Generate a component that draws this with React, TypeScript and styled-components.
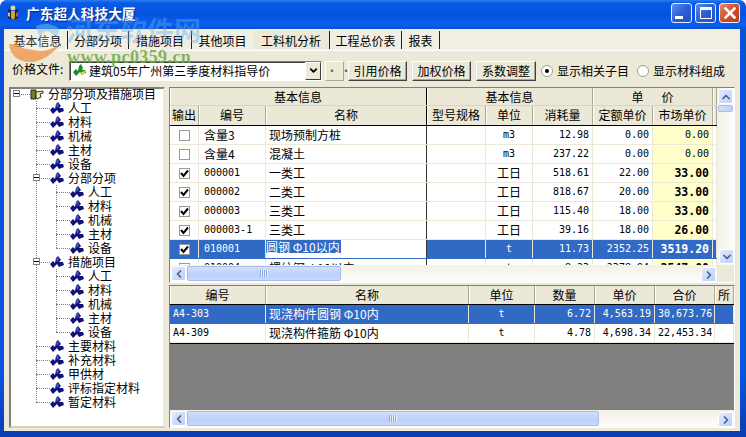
import React from "react";
import styled, { createGlobalStyle } from "styled-components";
import { ChevronDown, ChevronLeft, ChevronRight, ChevronUp } from "lucide-react";

const CJK = `"Noto Sans CJK SC", "Liberation Sans", sans-serif`;
const MONO = `"DejaVu Sans Mono", "Liberation Mono", monospace`;

const TOP_COLS = "29px 67px 161px 59px 47px 60px 60px 60px 1fr";
const TOP_GROUP_COLS = "257px 166px 120px 1fr";
const LOW_COLS = "96px 203px 66px 60px 60px 60px 1fr";

const tabs = [
  { label: "基本信息", width: 60 },
  { label: "分部分项", width: 61 },
  { label: "措施项目", width: 63 },
  { label: "其他项目", width: 61, plain: true },
  { label: "工料机分析", width: 77, active: true },
  { label: "工程总价表", width: 72 },
  { label: "报表", width: 38 },
];

const leaves = ["人工", "材料", "机械", "主材", "设备"];

type TreeItem = { label: string; children?: TreeItem[] };

const tree: TreeItem[] = [
  ...leaves.map((label) => ({ label })),
  { label: "分部分项", children: leaves.map((label) => ({ label })) },
  { label: "措施项目", children: leaves.map((label) => ({ label })) },
  { label: "主要材料" },
  { label: "补充材料" },
  { label: "甲供材" },
  { label: "评标指定材料" },
  { label: "暂定材料" },
];

const materials = [
  { out: false, code: "含量3", name: "现场预制方桩", unit: "m3", qty: "12.98", quota: "0.00", market: "0.00" },
  { out: false, code: "含量4", name: "混凝土", unit: "m3", qty: "237.22", quota: "0.00", market: "0.00" },
  { out: true, code: "000001", name: "一类工", unit: "工日", qty: "518.61", quota: "22.00", market: "33.00", bold: true },
  { out: true, code: "000002", name: "二类工", unit: "工日", qty: "818.67", quota: "20.00", market: "33.00", bold: true },
  { out: true, code: "000003", name: "三类工", unit: "工日", qty: "115.40", quota: "18.00", market: "33.00", bold: true },
  { out: true, code: "000003-1", name: "三类工", unit: "工日", qty: "39.16", quota: "18.00", market: "26.00", bold: true },
  { out: true, code: "010001", name: "圆钢 Φ10以内", unit: "t", qty: "11.73", quota: "2352.25", market: "3519.20", bold: true, selected: true },
  { out: false, code: "010004", name: "螺纹钢 Φ10以内", unit: "t", qty: "8.23", quota: "2378.94", market: "3547.00", bold: true },
];

const items = [
  { code: "A4-303", name: "现浇构件圆钢 Φ10内", unit: "t", qty: "6.72", price: "4,563.19", total: "30,673.76", selected: true },
  { code: "A4-309", name: "现浇构件箍筋 Φ10内", unit: "t", qty: "4.78", price: "4,698.34", total: "22,453.34" },
];

const isAscii = (s: string) => /^[\x00-\x7f]+$/.test(s);

const TreeGlyph = ({ color }: { color: string }) => (
  <svg width="14" height="13" viewBox="0 0 14 13">
    <path d="M0 8 L3 5 L5 7 L6 2 L8 0 L11 4 L9 6 L13 6 L14 9 L9 11 L7 8 L5 10 L3 12 Z" fill={color} />
    <path d="M6 2 L8 1 L9 4 L7 6 Z" fill="#5a78d8" opacity="0.7" />
  </svg>
);

const RootGlyph = () => (
  <svg width="14" height="13" viewBox="0 0 14 13">
    <path d="M1 2 H6 V11 H1 Z" fill="#7d7a22" stroke="#222" strokeWidth="1" />
    <path d="M6 4 L13 3 V5 L10 6 L11 9 L7 11 L6 9 Z" fill="#f6e9a0" stroke="#333" strokeWidth="1" />
  </svg>
);

const PriceGlyph = () => (
  <svg width="13" height="13" viewBox="0 0 13 13">
    <path d="M0 8 L3 5 L5 7 L6 2 L8 0 L10 4 L9 6 L12 6 L13 9 L9 11 L7 8 L5 10 L3 12 Z" fill="#1f8a2c" />
    <path d="M8 8 L12 7 L12 10 L9 11 Z" fill="#e8d84a" />
  </svg>
);

const AppGlyph = () => (
  <svg width="14" height="16" viewBox="0 0 14 16">
    <path d="M2 4 L5 6 H9 L12 4 L12 13 L7 15 L2 13 Z" fill="#1c1c28" />
    <path d="M5 6 H9 V13 L7 15 L5 13 Z" fill="#c8a63a" />
    <circle cx="7" cy="3" r="2.4" fill="#e8d2a0" />
    <path d="M2 7 L4 8 V12 L2 11 Z" fill="#b9b9c4" />
    <path d="M12 7 L10 8 V12 L12 11 Z" fill="#c9563a" />
  </svg>
);

const TickMark = () => (
  <svg width="9" height="9" viewBox="0 0 9 9">
    <path d="M1 4 L3.5 7 L8 1.5" fill="none" stroke="#000" strokeWidth="2" />
  </svg>
);

const CloseMark = () => (
  <svg width="12" height="12" viewBox="0 0 12 12">
    <path d="M1.5 1.5 L10.5 10.5 M10.5 1.5 L1.5 10.5" stroke="#fff" strokeWidth="2.6" strokeLinecap="square" />
  </svg>
);

const TreeBranch = ({ nodes, root }: { nodes: TreeItem[]; root?: boolean }) => (
  <TreeGroup $root={root}>
    {nodes.map((node, i) => (
      <div key={node.label + i}>
        <TreeRow>
          <TreeStub>{node.children && <Expander />}</TreeStub>
          <TreeGlyph color="#10107a" />
          <TreeLabel>{node.label}</TreeLabel>
        </TreeRow>
        {node.children && <TreeBranch nodes={node.children} />}
      </div>
    ))}
  </TreeGroup>
);

const HScroll = ({ thumb }: { thumb: number }) => (
  <HBar>
    <ScrollBtn>
      <ChevronLeft size={12} strokeWidth={3.5} />
    </ScrollBtn>
    <Thumb $size={thumb}>
      <Grip />
    </Thumb>
    <ScrollBtn $end>
      <ChevronRight size={12} strokeWidth={3.5} />
    </ScrollBtn>
  </HBar>
);

const App = () => {
  return (
    <Frame>
      <GlobalStyle />
      <TitleBar>
        <AppGlyph />
        <TitleText>广东超人科技大厦</TitleText>
        <WinButtons>
          <WinButton>
            <MinBar />
          </WinButton>
          <WinButton>
            <MaxBox />
          </WinButton>
          <WinButton $close>
            <CloseMark />
          </WinButton>
        </WinButtons>
      </TitleBar>

      <Body>
        <TabStrip>
          {tabs.map((t) => (
            <Tab key={t.label} $width={t.width} $active={t.active} $plain={t.plain}>
              {t.label}
            </Tab>
          ))}
        </TabStrip>

        <Toolbar>
          <FieldLabel>价格文件:</FieldLabel>
          <Combo>
            <PriceGlyph />
            <ComboText>建筑05年广州第三季度材料指导价</ComboText>
            <ComboArrow>
              <ChevronDown size={11} strokeWidth={4} />
            </ComboArrow>
          </Combo>
          <DotsButton $width={19} $left={3}>··</DotsButton>
          <RaisedButton $width={59} $left={4}>引用价格</RaisedButton>
          <RaisedButton $width={59} $left={5}>加权价格</RaisedButton>
          <RaisedButton $width={60} $left={5}>系数调整</RaisedButton>
          <RadioDot $checked $left={5} />
          <RadioText>显示相关子目</RadioText>
          <RadioDot $left={8} />
          <RadioText>显示材料组成</RadioText>
        </Toolbar>

        <Main>
          <TreePane>
            <TreeRootRow>
              <TreeStub>
                <Expander />
              </TreeStub>
              <RootGlyph />
              <TreeLabel>分部分项及措施项目</TreeLabel>
            </TreeRootRow>
            <TreeBranch nodes={tree} root />
          </TreePane>

          <RightColumn>
            <TopGrid>
              <TableArea>
                <HeaderRow $cols={TOP_GROUP_COLS} $height={18}>
                  <HeadCell $strong>基本信息</HeadCell>
                  <HeadCell>基本信息</HeadCell>
                  <HeadCell>{"单\u3000\u2002价"}</HeadCell>
                  <HeadCell />
                </HeaderRow>
                <HeaderRow $cols={TOP_COLS} $height={20} $ruled>
                  <HeadCell>输出</HeadCell>
                  <HeadCell>编号</HeadCell>
                  <HeadCell $strong>名称</HeadCell>
                  <HeadCell>型号规格</HeadCell>
                  <HeadCell>单位</HeadCell>
                  <HeadCell>消耗量</HeadCell>
                  <HeadCell>定额单价</HeadCell>
                  <HeadCell>市场单价</HeadCell>
                  <HeadCell />
                </HeaderRow>
                {materials.map((m) => (
                  <DataRow key={m.code} $cols={TOP_COLS} $selected={m.selected}>
                    <Cell $align="center">
                      <CheckBox>{m.out && <TickMark />}</CheckBox>
                    </Cell>
                    <Cell $pad={5} $mono={isAscii(m.code)}>{m.code}</Cell>
                    {m.selected ? (
                      <EditorCell>
                        <EditorText>{m.name}</EditorText>
                      </EditorCell>
                    ) : (
                      <Cell $pad={3} $strong>{m.name}</Cell>
                    )}
                    <Cell />
                    <Cell $align="center" $mono={isAscii(m.unit)}>{m.unit}</Cell>
                    <Cell $align="right" $pad={3} $mono>{m.qty}</Cell>
                    <Cell $align="right" $pad={3} $mono>{m.quota}</Cell>
                    <MarketCell $bold={m.bold} $selected={m.selected}>{m.market}</MarketCell>
                    <Cell />
                  </DataRow>
                ))}
              </TableArea>
              <VBar>
                <ScrollBtn>
                  <ChevronUp size={12} strokeWidth={3.5} />
                </ScrollBtn>
                <VThumb />
                <ScrollBtn $end>
                  <ChevronDown size={12} strokeWidth={3.5} />
                </ScrollBtn>
              </VBar>
              <HScroll thumb={154} />
              <Corner />
            </TopGrid>

            <LowerGrid>
              <TableArea>
                <HeaderRow $cols={LOW_COLS} $height={19} $ruled>
                  <HeadCell>编号</HeadCell>
                  <HeadCell>名称</HeadCell>
                  <HeadCell>单位</HeadCell>
                  <HeadCell>数量</HeadCell>
                  <HeadCell>单价</HeadCell>
                  <HeadCell>合价</HeadCell>
                  <HeadCell>所</HeadCell>
                </HeaderRow>
                {items.map((it) => (
                  <DataRow key={it.code} $cols={LOW_COLS} $selected={it.selected}>
                    <Cell $pad={3} $mono>{it.code}</Cell>
                    <Cell $pad={3}>{it.name}</Cell>
                    <Cell $align="center" $mono>{it.unit}</Cell>
                    <Cell $align="right" $pad={3} $mono>{it.qty}</Cell>
                    <Cell $align="right" $pad={3} $mono>{it.price}</Cell>
                    <Cell $align="right" $pad={3} $mono>{it.total}</Cell>
                    <Cell />
                  </DataRow>
                ))}
                <EmptyArea />
              </TableArea>
              <HScroll thumb={412} />
            </LowerGrid>
          </RightColumn>
        </Main>
      </Body>

      {/* site stamp laid over the top-left corner of the window */}
      <Watermark>
        <MarkLogo width="80" height="70" viewBox="0 0 80 70">
          <ellipse cx="34" cy="44" rx="24" ry="9" fill="#ffffff" fillOpacity="0.2" />
          <path d="M9 44 C10 55 18 62 30 62 C42 62 52 54 60 45 C50 50 42 52 34 50 C26 49 20 48 17 44 Z" fill="#ee8a3a" fillOpacity="0.7" />
          <path d="M36 26 C44 22 56 24 60 30 L56 38 L50 32 C46 30 42 32 40 38 Z" fill="#7cc0f4" fillOpacity="0.5" />
        </MarkLogo>
        <MarkName>河东软件网</MarkName>
        <MarkUrl>www.pc0359.cn</MarkUrl>
      </Watermark>
    </Frame>
  );
};

export default App;

const GlobalStyle = createGlobalStyle`
  html, body {
    margin: 0;
    padding: 0;
    background: #fff;
  }
  * {
    box-sizing: border-box;
  }
`;

const Frame = styled.div`
  position: relative;
  width: 746px;
  height: 437px;
  overflow: hidden;
  display: flex;
  flex-direction: column;
  padding: 0 6px 6px 4px;
  border-radius: 7px 7px 0 0;
  background: linear-gradient(#0a50d8, #0a55e0 85%, #0a3db0);
  font-family: ${CJK};
  font-size: 12px;
  color: #000;
`;

const TitleBar = styled.div`
  height: 29px;
  flex: none;
  margin: 0 -6px 0 -4px;
  padding: 0 6px 3px 6px;
  display: flex;
  align-items: center;
  border-radius: 7px 7px 0 0;
  background: linear-gradient(#2a7ff0 0, #0a5ae6 10%, #0552dc 50%, #0a60ee 85%, #0a4fd0 100%);
`;

const TitleText = styled.div`
  margin-left: 6px;
  font-size: 13.7px;
  font-weight: 700;
  line-height: 18px;
  color: #fff;
  text-shadow: 1px 1px 1px #0a2a80;
`;

const WinButtons = styled.div`
  margin-left: auto;
  display: flex;
  gap: 3px;
`;

const WinButton = styled.div<{ $close?: boolean }>`
  width: 21px;
  height: 20px;
  display: flex;
  align-items: center;
  justify-content: center;
  border: 1px solid #e4ecff;
  border-radius: 3px;
  background: ${(p) =>
    p.$close
      ? "linear-gradient(135deg, #e88a68, #d0502c 50%, #b83a18)"
      : "linear-gradient(135deg, #5c8cf0, #2c5ed8 50%, #2450c4)"};
`;

const MinBar = styled.span`
  width: 8px;
  height: 3px;
  margin: 9px 6px 0 0;
  background: #fff;
`;

const MaxBox = styled.span`
  width: 12px;
  height: 12px;
  border: 1px solid #fff;
  border-top-width: 3px;
`;

const Body = styled.div`
  flex: 1;
  display: flex;
  flex-direction: column;
  background: #ece9d8;
  min-height: 0;
`;

const TabStrip = styled.div`
  height: 22px;
  flex: none;
  display: flex;
  align-items: flex-end;
  padding: 0 0 1px 4px;
  border-bottom: 1px solid #fff;
  background: #f1efe3;
`;

const Tab = styled.div<{ $width: number; $active?: boolean; $plain?: boolean }>`
  width: ${(p) => p.$width}px;
  height: 18px;
  line-height: 20px;
  text-align: center;
  white-space: nowrap;
  border-right: ${(p) => (p.$plain ? "0" : "1px solid #222")};
  background: ${(p) => (p.$active ? "#ece9d8" : "transparent")};
`;

const Toolbar = styled.div`
  height: 36px;
  flex: none;
  display: flex;
  align-items: center;
  padding: 3px 0 0 8px;
`;

const FieldLabel = styled.div`
  width: 57px;
  margin-top: -5px;
  white-space: nowrap;
`;

const Combo = styled.div`
  width: 253px;
  height: 20px;
  display: flex;
  align-items: center;
  padding-left: 3px;
  background: #fff;
  border: 1px solid;
  border-color: #808080 #fff #fff #808080;
  box-shadow: inset 1px 1px 0 #404040;
`;

const ComboText = styled.span`
  margin-left: 3px;
  white-space: nowrap;
`;

const ComboArrow = styled.span`
  margin-left: auto;
  width: 16px;
  height: 18px;
  display: flex;
  align-items: center;
  justify-content: center;
  background: #ece9d8;
  border: 1px solid;
  border-color: #fff #404040 #404040 #fff;
`;

const RaisedButton = styled.div<{ $width: number; $left: number }>`
  width: ${(p) => p.$width}px;
  height: 20px;
  margin-left: ${(p) => p.$left}px;
  line-height: 18px;
  text-align: center;
  white-space: nowrap;
  background: #ece9d8;
  border: 1px solid;
  border-color: #fff #404040 #404040 #fff;
  box-shadow: inset -1px -1px 0 #aca899;
`;

const DotsButton = styled(RaisedButton)`
  color: #666;
  letter-spacing: 2px;
  border-color: #fff #aca899 #aca899 #fff;
  box-shadow: none;
`;

const RadioDot = styled.span<{ $checked?: boolean; $left: number }>`
  width: 12px;
  height: 12px;
  flex: none;
  margin-left: ${(p) => p.$left}px;
  display: flex;
  align-items: center;
  justify-content: center;
  border-radius: 50%;
  background: #fff;
  border: 1px solid #a0a090;
  &::after {
    content: "";
    width: 4px;
    height: 4px;
    border-radius: 50%;
    background: ${(p) => (p.$checked ? "#000" : "transparent")};
  }
`;

const RadioText = styled.span`
  margin-left: 4px;
  white-space: nowrap;
`;

const Main = styled.div`
  height: 341px;
  flex: none;
  display: flex;
  gap: 4px;
  padding-left: 5px;
`;

const TreePane = styled.div`
  width: 156px;
  background: #fff;
  border: 2px solid;
  border-color: #808080 #ece9d8 #d4d0c0 #808080;
`;

const TreeRootRow = styled.div`
  height: 14px;
  margin: -2px 0 0 -5px;
  display: flex;
  align-items: center;
`;

const TreeGroup = styled.div<{ $root?: boolean }>`
  position: relative;
  margin-left: ${(p) => (p.$root ? "15px" : "20px")};
  &::before {
    content: "";
    position: absolute;
    left: 10px;
    top: 0;
    bottom: 7px;
    border-left: 1px dotted #808080;
  }
`;

const TreeRow = styled.div`
  height: 14px;
  display: flex;
  align-items: center;
`;

const TreeStub = styled.span`
  position: relative;
  width: 24px;
  height: 14px;
  flex: none;
  &::after {
    content: "";
    position: absolute;
    left: 10px;
    right: 0;
    top: 7px;
    border-top: 1px dotted #808080;
  }
`;

const Expander = styled.span`
  position: absolute;
  z-index: 1;
  left: 7px;
  top: 3px;
  width: 7px;
  height: 7px;
  background: linear-gradient(#000, #000) center / 5px 1px no-repeat #fff;
  border: 1px solid #808080;
`;

const TreeLabel = styled.span`
  margin-left: 4px;
  line-height: 14px;
  white-space: nowrap;
`;

const RightColumn = styled.div`
  width: 566px;
  display: flex;
  flex-direction: column;
  gap: 2px;
`;

const TopGrid = styled.div`
  height: 196px;
  flex: none;
  display: grid;
  grid-template-columns: 1fr 17px;
  grid-template-rows: 177px 17px;
  background: #fff;
  border: 1px solid;
  border-color: #808080 #fff #fff #808080;
`;

const LowerGrid = styled.div`
  height: 143px;
  flex: none;
  display: flex;
  flex-direction: column;
  background: #fff;
  border: 1px solid;
  border-color: #808080 #fff #fff #808080;
`;

const TableArea = styled.div`
  min-width: 0;
  flex: 1;
  overflow: hidden;
  display: flex;
  flex-direction: column;
`;

const HeaderRow = styled.div<{ $cols: string; $height: number; $ruled?: boolean }>`
  height: ${(p) => p.$height}px;
  flex: none;
  display: grid;
  grid-template-columns: ${(p) => p.$cols};
  background: #ebe8d8;
  border-bottom: 1px solid ${(p) => (p.$ruled ? "#000" : "#d8d4c4")};
`;

const HeadCell = styled.div<{ $strong?: boolean }>`
  min-width: 0;
  overflow: hidden;
  text-align: center;
  white-space: pre;
  line-height: 18px;
  border-right: 1px solid ${(p) => (p.$strong ? "#000" : "#aca899")};
  box-shadow: inset 1px 0 0 #fff;
`;

const DataRow = styled.div<{ $cols: string; $selected?: boolean }>`
  height: 19px;
  flex: none;
  display: grid;
  grid-template-columns: ${(p) => p.$cols};
  background: ${(p) => (p.$selected ? "#316ac5" : "#fff")};
  color: ${(p) => (p.$selected ? "#fff" : "#000")};
  border-bottom: 1px solid ${(p) => (p.$selected ? "#316ac5" : "#ece9d8")};
`;

const Cell = styled.div<{ $align?: string; $pad?: number; $mono?: boolean; $strong?: boolean }>`
  min-width: 0;
  overflow: hidden;
  white-space: nowrap;
  line-height: 18px;
  text-align: ${(p) => p.$align || "left"};
  padding: 0 ${(p) => p.$pad || 0}px;
  font-family: ${(p) => (p.$mono ? MONO : CJK)};
  font-size: ${(p) => (p.$mono ? "10px" : "12px")};
  border-right: 1px solid ${(p) => (p.$strong ? "#333" : "#ece9d8")};
`;

const EditorCell = styled.div`
  min-width: 0;
  overflow: hidden;
  background: #fff;
  border-right: 1px solid #333;
`;

const EditorText = styled.span`
  display: block;
  width: fit-content;
  height: 13px;
  line-height: 13px;
  padding-right: 1px;
  background: #316ac5;
  color: #fff;
  white-space: nowrap;
`;

const MarketCell = styled.div<{ $bold?: boolean; $selected?: boolean }>`
  min-width: 0;
  overflow: hidden;
  text-align: right;
  padding-right: 3px;
  line-height: 18px;
  background: ${(p) => (p.$selected ? "#316ac5" : "#ffffcc")};
  font-family: ${MONO};
  font-size: ${(p) => (p.$bold ? "11.5px" : "10px")};
  font-weight: ${(p) => (p.$bold ? 700 : 400)};
  border-right: 1px solid #ece9d8;
`;

const CheckBox = styled.span`
  display: inline-flex;
  width: 11px;
  height: 11px;
  vertical-align: middle;
  margin-top: -2px;
  align-items: center;
  justify-content: center;
  background: #fff;
  border: 1px solid #9a9a90;
`;

const EmptyArea = styled.div`
  flex: 1;
  background: #808080;
  border-top: 1px solid #000;
`;

const HBar = styled.div`
  height: 17px;
  flex: none;
  display: flex;
  align-items: center;
  padding: 0 1px;
  background: linear-gradient(#f3f1e6, #fdfdfa);
`;

const VBar = styled.div`
  display: flex;
  flex-direction: column;
  align-items: center;
  padding: 1px 0;
  background: linear-gradient(90deg, #f3f1e6, #fdfdfa);
`;

const ScrollBtn = styled.span<{ $end?: boolean }>`
  width: 15px;
  height: 15px;
  flex: none;
  display: flex;
  align-items: center;
  justify-content: center;
  color: #4d6185;
  border: 1px solid #fff;
  border-radius: 2px;
  background: linear-gradient(135deg, #e2ebfe, #bccffa);
  ${(p) => (p.$end ? "margin: auto 0 0 auto;" : "")}
`;

const Thumb = styled.span<{ $size: number }>`
  width: ${(p) => p.$size}px;
  height: 15px;
  margin-left: 1px;
  display: flex;
  align-items: center;
  justify-content: center;
  border: 1px solid #a8bdec;
  border-radius: 2px;
  background: linear-gradient(#d2defb, #bcd0fa 60%, #c8d8fb);
`;

const VThumb = styled.span`
  width: 15px;
  height: 7px;
  margin-top: 1px;
  border: 1px solid #a8bdec;
  border-radius: 2px;
  background: linear-gradient(90deg, #d2defb, #bcd0fa);
`;

const Grip = styled.span`
  width: 8px;
  height: 7px;
  background: repeating-linear-gradient(90deg, #8ea8e0 0 1px, #e6edfd 1px 2px);
`;

const Corner = styled.div`
  background: #ece9d8;
`;

const Watermark = styled.div`
  position: absolute;
  z-index: 5;
  left: 0;
  top: 0;
  width: 210px;
  height: 70px;
  pointer-events: none;
`;

const MarkLogo = styled.svg`
  position: absolute;
  left: 0;
  top: 0;
  display: block;
`;

const MarkName = styled.div`
  position: absolute;
  left: 66px;
  top: 15px;
  font-size: 27px;
  font-weight: 700;
  line-height: 30px;
  white-space: nowrap;
  color: rgba(96, 170, 240, 0.42);
`;

const MarkUrl = styled.div`
  position: absolute;
  left: 67px;
  top: 48px;
  font-family: "Liberation Serif", serif;
  font-size: 18px;
  font-weight: 700;
  line-height: 18px;
  letter-spacing: 0.4px;
  white-space: nowrap;
  color: rgba(104, 170, 66, 0.82);
`;
